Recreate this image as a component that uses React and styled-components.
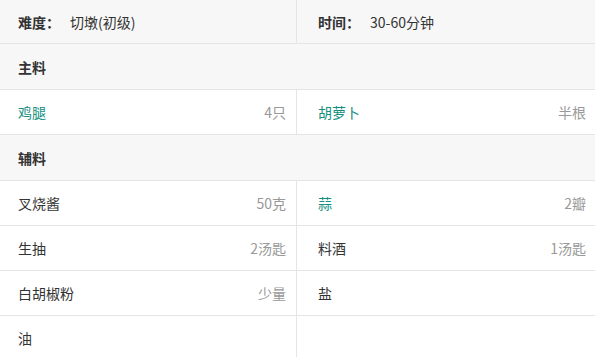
import styled, { createGlobalStyle } from "styled-components";

const GlobalStyle = createGlobalStyle`
  body {
    margin: 0;
    background: #fff;
    font-family: "Noto Sans CJK SC", "Noto Sans", sans-serif;
    font-size: 14px;
    color: #333;
  }
`;

const StyledTable = styled.div`
  display: grid;
  grid-template-columns: 297px 1fr;
  width: 595px;
`;

const StyledCell = styled.div`
  box-sizing: border-box;
  height: ${(p) => (p.$first ? "44px" : "45px")};
  display: flex;
  align-items: center;
  justify-content: space-between;
  padding: 0 ${(p) => (p.$right ? "9px" : "10px")} 0
    ${(p) => (p.$right ? "21px" : "18px")};
  background: ${(p) => (p.$shaded ? "#f7f7f7" : "#fff")};
  border-bottom: 1px solid #e5e5e5;
  border-right: ${(p) => (p.$right ? "none" : "1px solid #e5e5e5")};
`;

const StyledHeader = styled.div`
  grid-column: 1 / span 2;
  box-sizing: border-box;
  height: 46px;
  display: flex;
  align-items: center;
  padding-left: 18px;
  background: #f7f7f7;
  border-bottom: 1px solid #e5e5e5;
  font-weight: 700;
`;

const StyledLabel = styled.span`
  font-weight: 700;
  margin-right: 10px;
`;

const StyledInfo = styled.div`
  display: flex;
  align-items: center;
`;

const StyledName = styled.span`
  color: ${(p) => (p.$link ? "#15907f" : "#333")};
`;

const StyledAmount = styled.span`
  color: #999;
`;

const MAIN = [
  { name: "鸡腿", amount: "4只", link: true },
  { name: "胡萝卜", amount: "半根", link: true },
];

const EXTRA = [
  { name: "叉烧酱", amount: "50克" },
  { name: "蒜", amount: "2瓣", link: true },
  { name: "生抽", amount: "2汤匙" },
  { name: "料酒", amount: "1汤匙" },
  { name: "白胡椒粉", amount: "少量" },
  { name: "盐", amount: "" },
  { name: "油", amount: "" },
  { name: "", amount: "" },
];

const Ingredient = ({ item, right }) => (
  <StyledCell $right={right}>
    <StyledName $link={item.link}>{item.name}</StyledName>
    <StyledAmount>{item.amount}</StyledAmount>
  </StyledCell>
);

const App = () => {
  return (
    <>
      <GlobalStyle />
      <StyledTable>
        <StyledCell $first $shaded>
          <StyledInfo>
            <StyledLabel>难度：</StyledLabel>
            切墩(初级)
          </StyledInfo>
        </StyledCell>
        <StyledCell $first $shaded $right>
          <StyledInfo>
            <StyledLabel>时间：</StyledLabel>
            30-60分钟
          </StyledInfo>
        </StyledCell>
        <StyledHeader>主料</StyledHeader>
        {MAIN.map((item, i) => (
          <Ingredient key={i} item={item} right={i % 2 === 1} />
        ))}
        <StyledHeader>辅料</StyledHeader>
        {EXTRA.map((item, i) => (
          <Ingredient key={i} item={item} right={i % 2 === 1} />
        ))}
      </StyledTable>
    </>
  );
};

export default App;
